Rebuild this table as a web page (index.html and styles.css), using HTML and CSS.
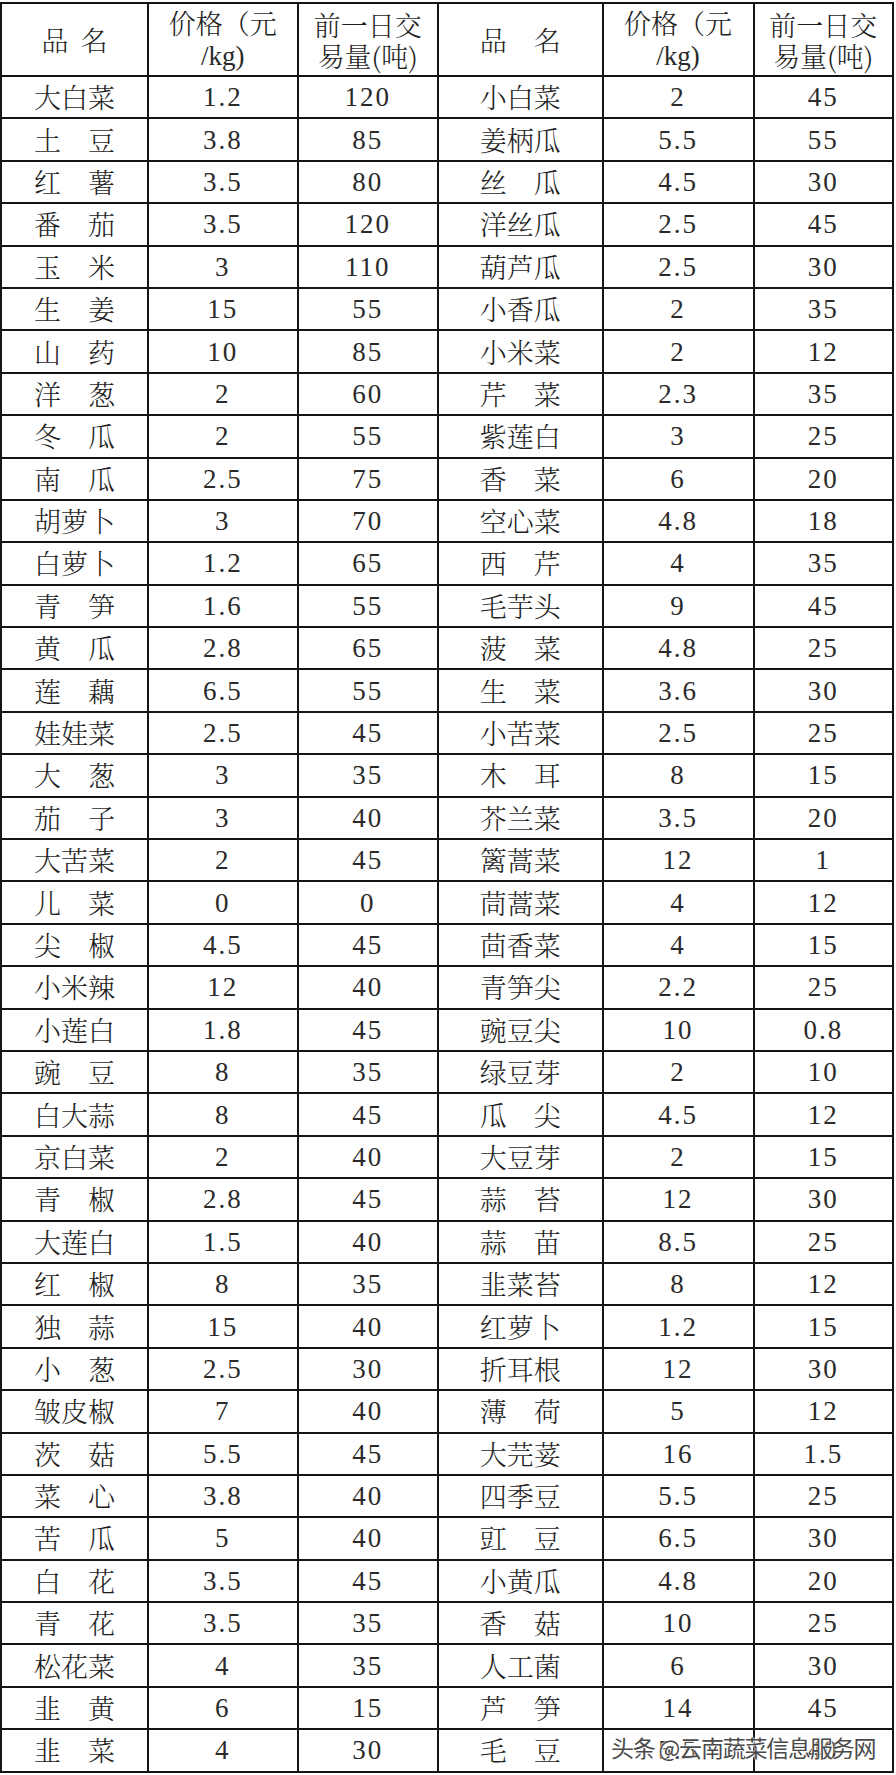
FILE: index.html
```html
<!DOCTYPE html>
<html lang="zh-CN">
<head>
<meta charset="utf-8">
<title>蔬菜价格表</title>
<link rel="stylesheet" href="styles.css">
</head>
<body>
<div class="page">
<table class="prices">
<colgroup>
<col class="c1"><col class="c2"><col class="c3"><col class="c4"><col class="c5"><col class="c6">
</colgroup>
<thead>
<tr class="head">
<th><span class="hname">品<span>名</span></span></th>
<th><span class="cjk">价格（元</span><br><span class="num">/kg)</span></th>
<th><span class="cjk">前一日交</span><br><span class="cjk">易量(吨)</span></th>
<th><span class="nm"><span>品</span><span>名</span></span></th>
<th><span class="cjk">价格（元</span><br><span class="num">/kg)</span></th>
<th><span class="cjk">前一日交</span><br><span class="cjk">易量(吨)</span></th>
</tr>
</thead>
<tbody id="rows"></tbody>
</table>
<div class="watermark">头条 @云南蔬菜信息服务网</div>
</div>
<script src="app.js"></script>
</body>
</html>
```
FILE: app.js
```js
var data = [
["大白菜","1.2","120","小白菜","2","45"],
["土豆","3.8","85","姜柄瓜","5.5","55"],
["红薯","3.5","80","丝瓜","4.5","30"],
["番茄","3.5","120","洋丝瓜","2.5","45"],
["玉米","3","110","葫芦瓜","2.5","30"],
["生姜","15","55","小香瓜","2","35"],
["山药","10","85","小米菜","2","12"],
["洋葱","2","60","芹菜","2.3","35"],
["冬瓜","2","55","紫莲白","3","25"],
["南瓜","2.5","75","香菜","6","20"],
["胡萝卜","3","70","空心菜","4.8","18"],
["白萝卜","1.2","65","西芹","4","35"],
["青笋","1.6","55","毛芋头","9","45"],
["黄瓜","2.8","65","菠菜","4.8","25"],
["莲藕","6.5","55","生菜","3.6","30"],
["娃娃菜","2.5","45","小苦菜","2.5","25"],
["大葱","3","35","木耳","8","15"],
["茄子","3","40","芥兰菜","3.5","20"],
["大苦菜","2","45","篱蒿菜","12","1"],
["儿菜","0","0","茼蒿菜","4","12"],
["尖椒","4.5","45","茴香菜","4","15"],
["小米辣","12","40","青笋尖","2.2","25"],
["小莲白","1.8","45","豌豆尖","10","0.8"],
["豌豆","8","35","绿豆芽","2","10"],
["白大蒜","8","45","瓜尖","4.5","12"],
["京白菜","2","40","大豆芽","2","15"],
["青椒","2.8","45","蒜苔","12","30"],
["大莲白","1.5","40","蒜苗","8.5","25"],
["红椒","8","35","韭菜苔","8","12"],
["独蒜","15","40","红萝卜","1.2","15"],
["小葱","2.5","30","折耳根","12","30"],
["皱皮椒","7","40","薄荷","5","12"],
["茨菇","5.5","45","大芫荽","16","1.5"],
["菜心","3.8","40","四季豆","5.5","25"],
["苦瓜","5","40","豇豆","6.5","30"],
["白花","3.5","45","小黄瓜","4.8","20"],
["青花","3.5","35","香菇","10","25"],
["松花菜","4","35","人工菌","6","30"],
["韭黄","6","15","芦笋","14","45"],
["韭菜","4","30","毛豆","5.5","40"]
];
function nameCell(n){
  var td=document.createElement("td");
  var s=document.createElement("span");
  s.className="nm";
  n.split("").forEach(function(ch){var c=document.createElement("span");c.textContent=ch;s.appendChild(c);});
  td.appendChild(s);
  return td;
}
function numCell(v){
  var td=document.createElement("td");
  td.className="n";
  td.textContent=v;
  return td;
}
var body=document.getElementById("rows");
data.forEach(function(r){
  var tr=document.createElement("tr");
  tr.appendChild(nameCell(r[0]));
  tr.appendChild(numCell(r[1]));
  tr.appendChild(numCell(r[2]));
  tr.appendChild(nameCell(r[3]));
  tr.appendChild(numCell(r[4]));
  tr.appendChild(numCell(r[5]));
  body.appendChild(tr);
});
```
FILE: styles.css
```css
html, body {
  margin: 0;
  padding: 0;
  background: #ffffff;
}
.page {
  position: relative;
  width: 896px;
  padding-top: 2px;
  padding-bottom: 4px;
}
.prices {
  border-collapse: collapse;
  table-layout: fixed;
  width: 894px;
  color: #1e1e1e;
  font-family: "Noto Serif CJK SC", "Noto Sans CJK SC", "Liberation Serif", serif;
  font-size: 27px;
}
.c1 { width: 147px; }
.c2 { width: 149.5px; }
.c3 { width: 140.5px; }
.c4 { width: 164.5px; }
.c5 { width: 151px; }
.c6 { width: 139.5px; }
.prices th,
.prices td {
  border: 2px solid #151515;
  padding: 0;
  text-align: center;
  vertical-align: middle;
  overflow: hidden;
  white-space: nowrap;
}
.prices th {
  font-weight: normal;
  line-height: 31px;
  height: 71px;
}
.prices td {
  line-height: 34px;
  height: 40.4px;
  box-sizing: content-box;
}
.cjk {
  font-family: "Noto Serif CJK SC", "Noto Sans CJK SC", sans-serif;
  font-weight: 300;
}
.num,
.n {
  font-family: "Liberation Serif", serif;
  color: #2a2a2a;
}
.n {
  font-size: 27px;
  letter-spacing: 2px;
  padding-left: 2px;
}
.nm {
  display: inline-flex;
  justify-content: space-between;
  width: 81px;
  height: 34px;
  font-family: "Noto Serif CJK SC", "Noto Sans CJK SC", sans-serif;
  font-weight: 300;
  line-height: 34px;
  vertical-align: top;
}
.hname {
  display: inline-flex;
  gap: 12px;
  font-family: "Noto Serif CJK SC", "Noto Sans CJK SC", sans-serif;
  font-weight: 300;
}
.watermark {
  position: absolute;
  left: 611px;
  bottom: 15px;
  font-family: "Noto Sans CJK SC", sans-serif;
  font-size: 23px;
  line-height: 30px;
  color: #4a4a4a;
  letter-spacing: -1.2px;
  text-shadow: 0 0 2px #ffffff, 0 0 2px #ffffff, 1px 1px 1px rgba(255,255,255,0.9);
  white-space: nowrap;
}
```
